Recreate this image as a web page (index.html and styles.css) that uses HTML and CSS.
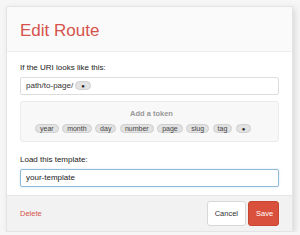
FILE: index.html
```html
<!DOCTYPE html>
<html lang="en">
<head>
<meta charset="UTF-8" />
<title>Edit Route</title>
<link rel="stylesheet" href="styles.css">
</head>
<body>

<div class="modal">
  <div class="modal-header">
    <h1>Edit Route</h1>
  </div>

  <div class="modal-body">
    <label class="field-label">If the URI looks like this:</label>
    <div class="uri-input">
      <span>path/to-page/</span>
      <span class="token dot-token">●</span>
    </div>

    <div class="token-box">
      <div class="token-title">Add a token</div>
      <div class="token-list">
        <span class="token">year</span>
        <span class="token">month</span>
        <span class="token">day</span>
        <span class="token">number</span>
        <span class="token">page</span>
        <span class="token">slug</span>
        <span class="token">tag</span>
        <span class="token dot-token">●</span>
      </div>
    </div>

    <label class="field-label">Load this template:</label>
    <input type="text" class="template-input" value="your-template" />
  </div>

  <div class="modal-footer">
    <a class="delete-link">Delete</a>
    <div class="buttons">
      <button class="btn">Cancel</button>
      <button class="btn btn-save">Save</button>
    </div>
  </div>
</div>

</body>
</html>
```

FILE: styles.css
```css
* {
  box-sizing: border-box;
}
body {
  font-family: 'Liberation Sans', Arial, sans-serif;
  background: #f6f6f6;
  margin: 0;
  padding: 6px 0 0 6px;
}
.modal {
  width: 287px;
  height: 226px;
  background: #fff;
  border: 1px solid #e4e4e4;
  box-shadow: 2px 2px 6px rgb(0 0 0 / 0.12);
  display: flex;
  flex-direction: column;
}
.modal-header {
  height: 46px;
  background: #fafafa;
  border-bottom: 1px solid #eee;
  padding: 14px 13px 0;
}
h1 {
  margin: 0;
  font-size: 17px;
  font-weight: 400;
  color: #d6524c;
  line-height: 20px;
}
.modal-body {
  padding: 11px 13px 8px;
  display: flex;
  flex-direction: column;
}
.field-label {
  font-size: 8px;
  color: #222;
  line-height: 10px;
  margin-bottom: 4px;
}
.uri-input {
  height: 18px;
  border: 1px solid #ddd;
  border-radius: 2px;
  padding: 0 5px;
  display: flex;
  align-items: center;
  gap: 2px;
  font-size: 8px;
  color: #333;
}
.token-box {
  margin-top: 6px;
  height: 41px;
  background: #f8f8f8;
  border: 1px solid #ebebeb;
  border-radius: 3px;
  padding: 7px 10px 0 14px;
  margin-bottom: 13px;
}
.token-title {
  text-align: center;
  font-size: 7.5px;
  font-weight: 700;
  color: #999;
  line-height: 10px;
  margin-bottom: 5px;
}
.token-list {
  display: flex;
  gap: 3.5px;
}
.token {
  display: inline-block;
  height: 9px;
  line-height: 8px;
  padding: 0 4px;
  font-size: 7px;
  color: #444;
  background: #e2e2e2;
  border: 1px solid #cfcfcf;
  border-radius: 5px;
}
.dot-token {
  font-size: 6px;
  color: #222;
  padding: 0 5px;
}
.template-input {
  height: 18px;
  border: 1px solid #8fbbd8;
  border-radius: 2px;
  padding: 0 5px;
  font-family: inherit;
  font-size: 8px;
  color: #222;
  outline: none;
  box-shadow: 0 0 2px rgb(102 160 210 / 0.35);
}
.modal-footer {
  margin-top: auto;
  height: 38px;
  background: #f2f2f2;
  border-top: 1px solid #e6e6e6;
  display: flex;
  justify-content: space-between;
  align-items: center;
  padding: 0 13px;
}
.delete-link {
  font-size: 7.5px;
  color: #d6524c;
}
.buttons {
  display: flex;
  gap: 2px;
}
.btn {
  height: 25px;
  font-family: inherit;
  font-size: 7.5px;
  border-radius: 3px;
  border: 1px solid #d8d8d8;
  background: #fff;
  color: #333;
  padding: 0 7px;
}
.btn-save {
  background: #d9513c;
  border-color: #c84530;
  color: #fff;
  padding: 0 7px;
  width: 31px;
}
```
